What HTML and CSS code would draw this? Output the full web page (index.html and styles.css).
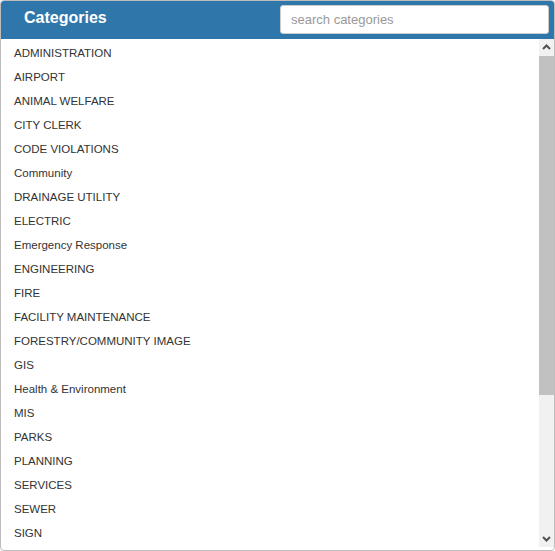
FILE: index.html
```html
<!DOCTYPE html>
<html>
<head>
<meta charset="utf-8">
<link rel="stylesheet" href="styles.css">
</head>
<body>
<div class="panel">
  <div class="panel-header">
    <span class="title">Categories</span>
    <input class="search" type="text" placeholder="search categories">
  </div>
  <div class="panel-body">
    <ul class="list">
      <li>ADMINISTRATION</li>
      <li>AIRPORT</li>
      <li>ANIMAL WELFARE</li>
      <li>CITY CLERK</li>
      <li>CODE VIOLATIONS</li>
      <li>Community</li>
      <li>DRAINAGE UTILITY</li>
      <li>ELECTRIC</li>
      <li>Emergency Response</li>
      <li>ENGINEERING</li>
      <li>FIRE</li>
      <li>FACILITY MAINTENANCE</li>
      <li>FORESTRY/COMMUNITY IMAGE</li>
      <li>GIS</li>
      <li>Health &amp; Environment</li>
      <li>MIS</li>
      <li>PARKS</li>
      <li>PLANNING</li>
      <li>SERVICES</li>
      <li>SEWER</li>
      <li>SIGN</li>
    </ul>
    <div class="scrollbar">
      <div class="sb-btn">
        <svg width="15" height="17" viewBox="0 0 15 17"><path d="M4 10 L7.5 6.5 L11 10" fill="none" stroke="#505050" stroke-width="2"/></svg>
      </div>
      <div class="sb-track">
        <div class="sb-thumb" style="height: 339px"></div>
      </div>
      <div class="sb-btn">
        <svg width="15" height="17" viewBox="0 0 15 17"><path d="M4 7 L7.5 10.5 L11 7" fill="none" stroke="#505050" stroke-width="2"/></svg>
      </div>
    </div>
  </div>
</div>
</body>
</html>
```
FILE: styles.css
```css
html, body {
  margin: 0;
  padding: 0;
  background: #fff;
}
.panel {
  box-sizing: border-box;
  width: 555px;
  height: 551px;
  border: 1px solid #bdbdbd;
  border-radius: 4px;
  overflow: hidden;
  display: flex;
  flex-direction: column;
  font-family: "Liberation Sans", Arial, sans-serif;
}
.panel-header {
  box-sizing: border-box;
  height: 39px;
  flex: none;
  background: #2f77ab;
  display: flex;
  align-items: center;
  padding: 0 6px 0 24px;
  margin: -1px -1px 0 -1px;
}
.title {
  color: #fff;
  font-weight: bold;
  font-size: 16px;
  margin-top: -4px;
}
.search {
  box-sizing: border-box;
  margin-left: auto;
  width: 269px;
  height: 29px;
  border: 1px solid #ccc;
  border-radius: 3px;
  padding: 0 10px;
  font-family: "Liberation Sans", Arial, sans-serif;
  font-size: 13px;
  color: #555;
  background: #fff;
  outline: none;
}
.search::placeholder {
  color: #999;
}
.panel-body {
  flex: 1;
  min-height: 0;
  display: flex;
  align-items: flex-start;
}
.list {
  list-style: none;
  margin: 0;
  padding: 2px 0 0 0;
  flex: 1;
  height: 100%;
  box-sizing: border-box;
  overflow: hidden;
}
.list li {
  padding-left: 13px;
  line-height: 24px;
  font-size: 11.5px;
  color: #333;
}
.scrollbar {
  flex: none;
  width: 15px;
  height: 508px;
  background: #f1f1f1;
  display: flex;
  flex-direction: column;
}
.sb-btn {
  height: 17px;
  flex: none;
}
.sb-btn svg {
  display: block;
}
.sb-track {
  flex: 1;
}
.sb-thumb {
  background: #c1c1c1;
}
```
